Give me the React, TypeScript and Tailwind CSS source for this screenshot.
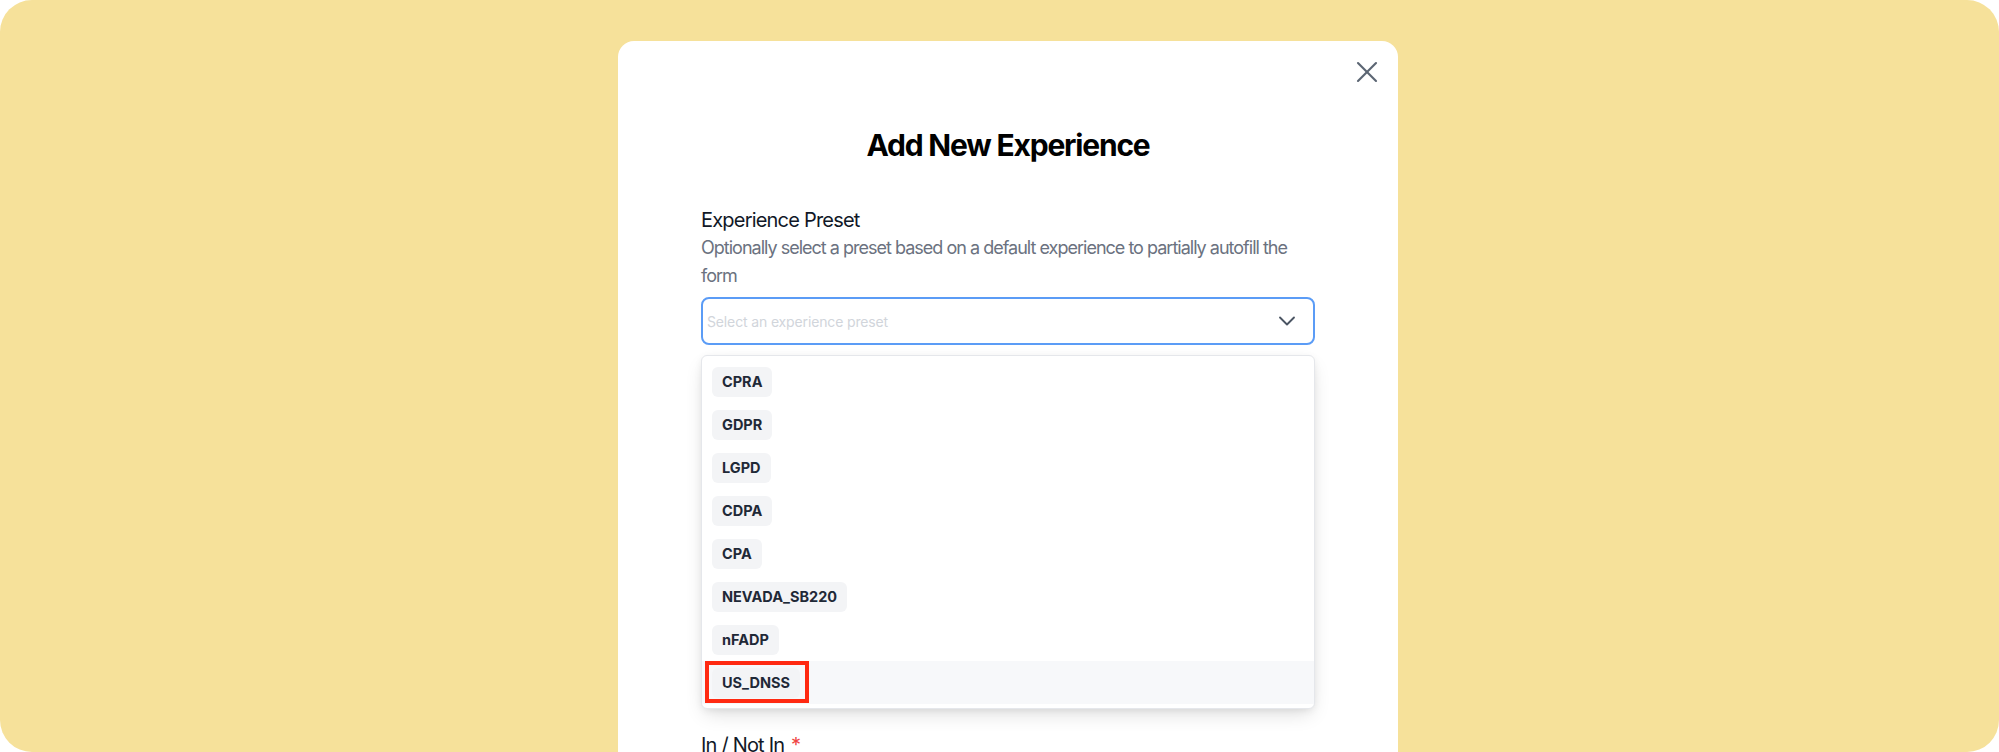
import { X, ChevronDown } from "lucide-react";

const presets = ["CPRA", "GDPR", "LGPD", "CDPA", "CPA", "NEVADA_SB220", "nFADP", "US_DNSS"];

export default function App() {
  const active = "US_DNSS";

  return (
    <div className="w-full h-[752px] bg-white" style={{ fontFamily: "Inter, 'Noto Sans', sans-serif" }}>
      <div className="h-full rounded-[32px] bg-[#f6e19a] overflow-hidden flex justify-center pl-[17px] pt-[41px]">
        <div className="relative w-[780px] bg-white rounded-t-[16px] px-[83px] pt-[86px] pb-10">
          <button className="absolute top-[12px] right-[12px] w-[38px] h-[38px] flex items-center justify-center text-[#5b6573]">
            <X size={36} strokeWidth={1.4} className="shrink-0" />
          </button>

          <h1 className="text-center text-[30px] leading-[36px] font-bold tracking-[-0.04em] text-black">
            Add New Experience
          </h1>

          <div className="mt-[43px]">
            <label className="block text-[20px] leading-[28px] tracking-[-0.04em] text-[#111827]">
              Experience Preset
            </label>
            <p className="text-[18px] leading-[28px] tracking-[-0.055em] text-[#6b7280]">
              Optionally select a preset based on a default experience to partially autofill the form
            </p>

            <div className="mt-[7px] h-[48px] rounded-[8px] border-2 border-[#5b9cf6] flex items-center justify-between pl-[4px] pr-[12px]">
              <span className="text-[14px] tracking-[-0.01em] text-[#d1d5db]">Select an experience preset</span>
              <ChevronDown size={28} strokeWidth={1.6} className="shrink-0 text-[#4b5563]" />
            </div>

            <ul className="mt-[10px] rounded-[6px] border border-[#e5e7eb] bg-white py-[4px] shadow-[0_8px_20px_-4px_rgba(0,0,0,0.14),0_2px_8px_-2px_rgba(0,0,0,0.1)]">
              {presets.map((p) => (
                <li
                  key={p}
                  className={`relative h-[43px] flex items-center pl-[10px] ${p === active ? "bg-[#f7f8fa]" : ""}`}
                >
                  <span className="h-[30px] px-[10px] flex items-center rounded-[6px] bg-[#f3f4f6] text-[14.5px] font-bold text-[#1f2937]">
                    {p}
                  </span>
                  {p === active && (
                    <div className="absolute left-[3px] top-0 w-[104px] h-[42px] border-[4px] border-[#ff2a12]" />
                  )}
                </li>
              ))}
            </ul>

            <label className="block mt-[22px] text-[20px] leading-[28px] tracking-[-0.04em] text-[#111827]">
              In / Not In <span className="ml-[2px] text-[#ef4444]">*</span>
            </label>
          </div>
        </div>
      </div>
    </div>
  );
}
